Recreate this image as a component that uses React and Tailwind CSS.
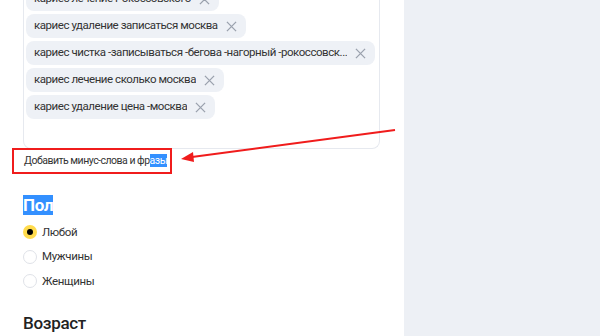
import React from 'react';

const phrases = [
  'кариес лечение Рокоссовского',
  'кариес удаление записаться москва',
  'кариес чистка -записываться -бегова -нагорный -рокоссовск...',
  'кариес лечение сколько москва',
  'кариес удаление цена -москва',
];

function CloseIcon() {
  return (
    <svg className="w-[11px] h-[11px] shrink-0" viewBox="0 0 12 12" fill="none" stroke="#9aa1ad" strokeWidth="1.4">
      <path d="M1 1l10 10M11 1L1 11" />
    </svg>
  );
}

function Radio({ label, checked }) {
  return (
    <label className="flex items-center gap-[5px] h-[24.5px]">
      {checked ? (
        <span className="w-[14px] h-[14px] rounded-full bg-[#ffdb4d] flex items-center justify-center">
          <span className="w-[6px] h-[6px] rounded-full bg-black" />
        </span>
      ) : (
        <span className="w-[14px] h-[14px] rounded-full border border-[#dfe2e8] bg-white" />
      )}
      <span className="text-[11.5px] tracking-[-0.35px] text-[#333]">{label}</span>
    </label>
  );
}

export default function App() {
  return (
    <div className="relative flex w-[600px] h-[336px] overflow-hidden bg-white" style={{ fontFamily: 'Roboto, "Liberation Sans", Arial, sans-serif' }}>
      {/* Left column */}
      <div className="w-[404px] shrink-0 pl-[23px]">
        {/* Minus phrases card */}
        <div className="-mt-[16px] w-[357px] border border-t-0 border-[#e6e9ef] rounded-b-lg pl-[2px] pr-[2px] pt-[3px] pb-[29px]">
          <div className="flex flex-col items-start gap-[3px]">
            {phrases.map((p) => (
              <div key={p} className="h-[24px] max-w-[352px] rounded-lg bg-[#eef1f6] pl-[8px] pr-[9px] flex items-center gap-[8px] text-[11.5px] tracking-[-0.45px] text-[#333]">
                <span className="whitespace-nowrap overflow-hidden">{p}</span>
                <CloseIcon />
              </div>
            ))}
          </div>
        </div>

        {/* Add minus words link */}
        <div className="-mt-[1px] -ml-[11px] w-[160px] h-[26px] border-2 border-[#f01c1c] flex items-center pl-[10px] text-[10.5px] tracking-[-0.5px] text-[#333] whitespace-nowrap">
          <span>
            Добавить минус-слова и фр<span className="bg-[#3390ff] text-white">азы</span>
          </span>
        </div>

        {/* Gender */}
        <div className="mt-[20px]">
          <h2 className="text-[17px] font-bold tracking-[-0.3px] leading-[22px]">
            <span className="bg-[#3390ff] text-white">Пол</span>
          </h2>
          <div className="mt-[4px] flex flex-col">
            <Radio label="Любой" checked />
            <Radio label="Мужчины" />
            <Radio label="Женщины" />
          </div>
        </div>

        {/* Age */}
        <h2 className="mt-[18px] text-[17px] font-medium tracking-[-0.3px] text-[#222] leading-[22px]">Возраст</h2>
      </div>

      {/* Right panel */}
      <div className="flex-1 bg-[#edf0f5]" />

      {/* Annotation arrow */}
      <svg className="absolute left-0 top-0 pointer-events-none" width="600" height="336">
        <line x1="395" y1="130" x2="192" y2="157" stroke="#f01c1c" strokeWidth="2" />
        <polygon points="181,159 193,152 194,162" fill="#f01c1c" />
      </svg>
    </div>
  );
}
